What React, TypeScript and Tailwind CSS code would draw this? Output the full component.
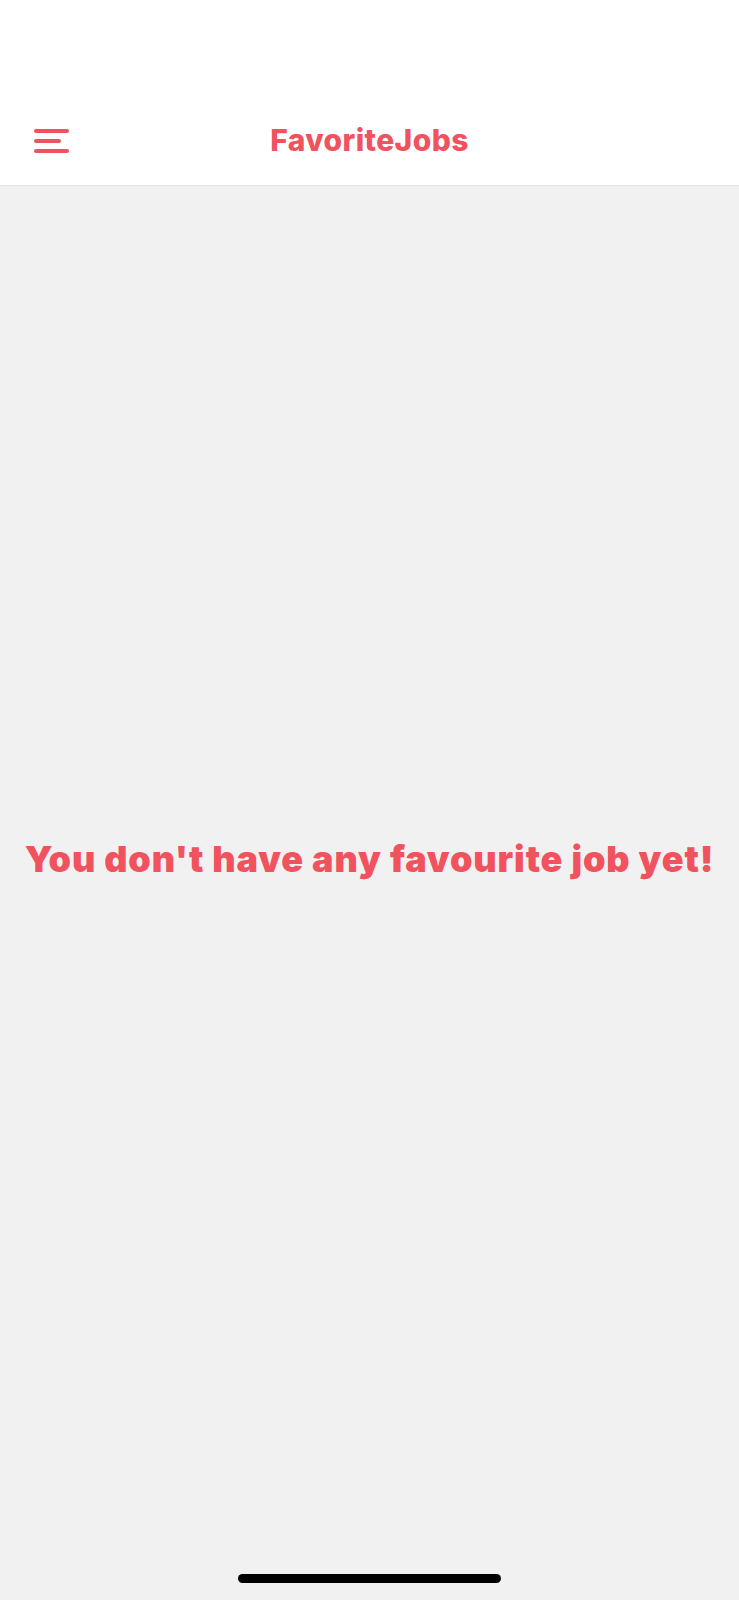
export default function App() {
  return (
    <div
      className="flex h-[1600px] w-full flex-col bg-[#f1f1f1]"
      style={{ fontFamily: 'Inter, "Noto Sans", sans-serif' }}
    >
      {/* Header */}
      <header className="h-[186px] shrink-0 border-b border-[#e2e2e2] bg-white pt-[96px]">
        <div className="relative flex h-[89px] items-center justify-center">
          <button className="absolute left-[34px] top-1/2 flex -translate-y-1/2 flex-col gap-[6px]">
            <span className="block h-[4px] w-[35px] rounded-full bg-[#f0525e]"></span>
            <span className="block h-[4px] w-[27px] rounded-full bg-[#f0525e]"></span>
            <span className="block h-[4px] w-[35px] rounded-full bg-[#f0525e]"></span>
          </button>
          <h1 className="text-[30px] font-extrabold tracking-[0.4px] text-[#f0525e]">FavoriteJobs</h1>
        </div>
      </header>

      {/* Empty state */}
      <main className="flex h-[1346px] shrink-0 items-center justify-center">
        <p className="whitespace-nowrap text-[36px] font-black tracking-[0.9px] text-[#f0525e]">
          You don't have any favourite job yet!
        </p>
      </main>

      {/* Home indicator */}
      <div className="flex h-[68px] shrink-0 justify-center pt-[42px]">
        <div className="h-[9px] w-[263px] rounded-full bg-black"></div>
      </div>
    </div>
  )
}
